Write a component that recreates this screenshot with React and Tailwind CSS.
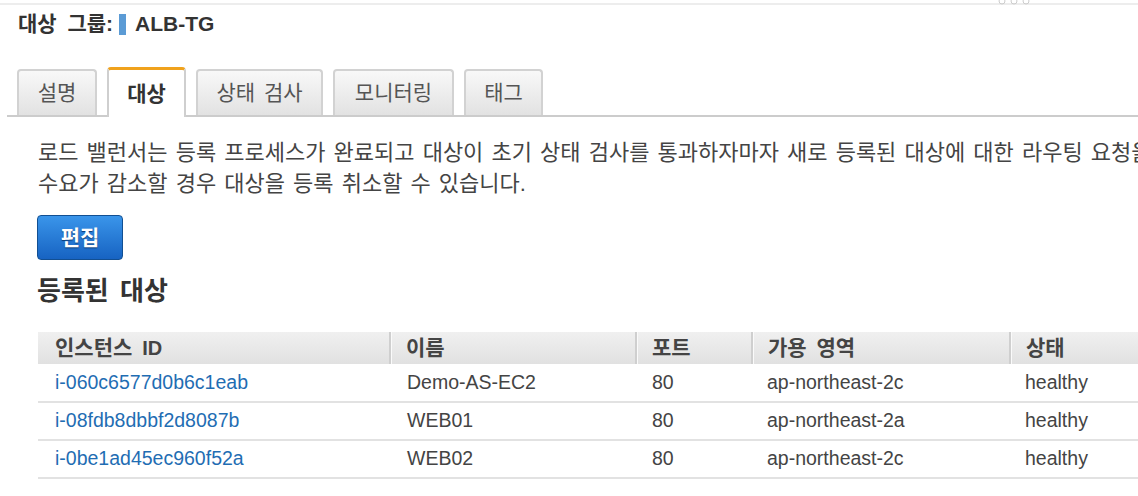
import React from "react";

const rows = [
  { id: "i-060c6577d0b6c1eab", name: "Demo-AS-EC2", port: "80", az: "ap-northeast-2c", status: "healthy" },
  { id: "i-08fdb8dbbf2d8087b", name: "WEB01", port: "80", az: "ap-northeast-2a", status: "healthy" },
  { id: "i-0be1ad45ec960f52a", name: "WEB02", port: "80", az: "ap-northeast-2c", status: "healthy" },
];

const tabs = [
  { label: "설명", w: "w-[80px]" },
  { label: "대상", w: "w-[79px]", active: true },
  { label: "상태 검사", w: "w-[127px]" },
  { label: "모니터링", w: "w-[121px]" },
  { label: "태그", w: "w-[79px]" },
];

function Tab({ label, w, active }) {
  if (active) {
    return (
      <div
        className={`${w} h-[50px] -mb-[2px] flex items-center justify-center bg-white border-2 border-b-0 border-[#cfcfcf] border-t-[3px] border-t-[#f0a21c] rounded-t-[4px] font-bold text-[#333]`}
      >
        {label}
      </div>
    );
  }
  return (
    <div
      className={`${w} h-[46px] flex items-center justify-center bg-gradient-to-b from-[#f8f8f8] to-[#e2e2e2] border-2 border-b-0 border-[#d2d2d2] rounded-t-[4px] text-[#555]`}
    >
      {label}
    </div>
  );
}

export default function App() {
  return (
    <div className="relative w-[1138px] h-[496px] overflow-hidden bg-white text-[#444] font-['Liberation_Sans','Noto_Sans_CJK_KR',sans-serif]">
      {/* top rule + drag handle */}
      <div className="mt-[3px] h-[2px] bg-[#ededed]" />
      <svg className="absolute left-[996px] top-[-3px]" width="40" height="10" viewBox="0 0 40 10">
        <circle cx="6" cy="4" r="3" fill="none" stroke="#ccc" strokeWidth="1" />
        <circle cx="18" cy="4" r="3" fill="none" stroke="#ccc" strokeWidth="1" />
        <circle cx="30" cy="4" r="3" fill="none" stroke="#ccc" strokeWidth="1" />
      </svg>

      {/* title */}
      <div className="mt-[6px] pl-[18px] h-[26px] flex items-center text-[21px] font-bold text-[#333] [word-spacing:5px]">
        <span>대상 그룹:</span>
        <span className="ml-[6px] mr-[9px] w-[7px] h-[21px] bg-[#5b9bd5]" />
        <span>ALB-TG</span>
      </div>

      {/* tabs */}
      <div className="mt-[30px] ml-[7px] pl-[10px] flex items-end gap-[10px] border-b-2 border-[#cccccc] text-[21px] [word-spacing:3px]">
        {tabs.map((t) => (
          <Tab key={t.label} {...t} />
        ))}
      </div>

      {/* description */}
      <p className="mt-[20px] pl-[38px] text-[22px] leading-[31px] whitespace-nowrap text-[#444] [word-spacing:2px]">
        로드 밸런서는 등록 프로세스가 완료되고 대상이 초기 상태 검사를 통과하자마자 새로 등록된 대상에 대한 라우팅 요청을 시작합니다.
        <br />
        수요가 감소할 경우 대상을 등록 취소할 수 있습니다.
      </p>

      <button className="block mt-[16px] ml-[37px] w-[86px] h-[45px] rounded-[4px] border border-[#124f92] bg-gradient-to-b from-[#3a95ea] to-[#1763c2] text-white font-bold text-[21px] [text-shadow:0_1px_1px_#0b3a73]">
        편집
      </button>

      <h2 className="mt-[15px] pl-[37px] text-[26px] leading-[32px] font-bold text-[#333] [word-spacing:4px]">등록된 대상</h2>

      {/* registered targets */}
      <table className="mt-[25px] ml-[38px] w-[1150px] table-fixed border-collapse text-[19.5px]">
        <colgroup>
          <col className="w-[352px]" />
          <col className="w-[246px]" />
          <col className="w-[116px]" />
          <col className="w-[258px]" />
          <col className="w-[178px]" />
        </colgroup>
        <thead>
          <tr className="h-[32px] bg-gradient-to-b from-[#f0f0f0] to-[#e1e1e1] text-left text-[#444] text-[21px] [word-spacing:4px]">
            <th className="pl-[17px] font-bold">
              인스턴스 <span className="text-[20px]">ID</span>
            </th>
            <th className="pl-[15px] font-bold border-l-2 border-[#cfcfcf] shadow-[inset_1px_0_0_#fafafa]">이름</th>
            <th className="pl-[15px] font-bold border-l-2 border-[#cfcfcf] shadow-[inset_1px_0_0_#fafafa]">포트</th>
            <th className="pl-[15px] font-bold border-l-2 border-[#cfcfcf] shadow-[inset_1px_0_0_#fafafa]">가용 영역</th>
            <th className="pl-[15px] font-bold border-l-2 border-[#cfcfcf] shadow-[inset_1px_0_0_#fafafa]">상태</th>
          </tr>
        </thead>
        <tbody>
          {rows.map((r) => (
            <tr key={r.id} className="h-[38px] border-b-2 border-[#e2e2e2]">
              <td className="pl-[17px] text-[#1f6db3]">{r.id}</td>
              <td className="pl-[17px]">{r.name}</td>
              <td className="pl-[16px]">{r.port}</td>
              <td className="pl-[15px]">{r.az}</td>
              <td className="pl-[15px]">{r.status}</td>
            </tr>
          ))}
        </tbody>
      </table>
    </div>
  );
}
